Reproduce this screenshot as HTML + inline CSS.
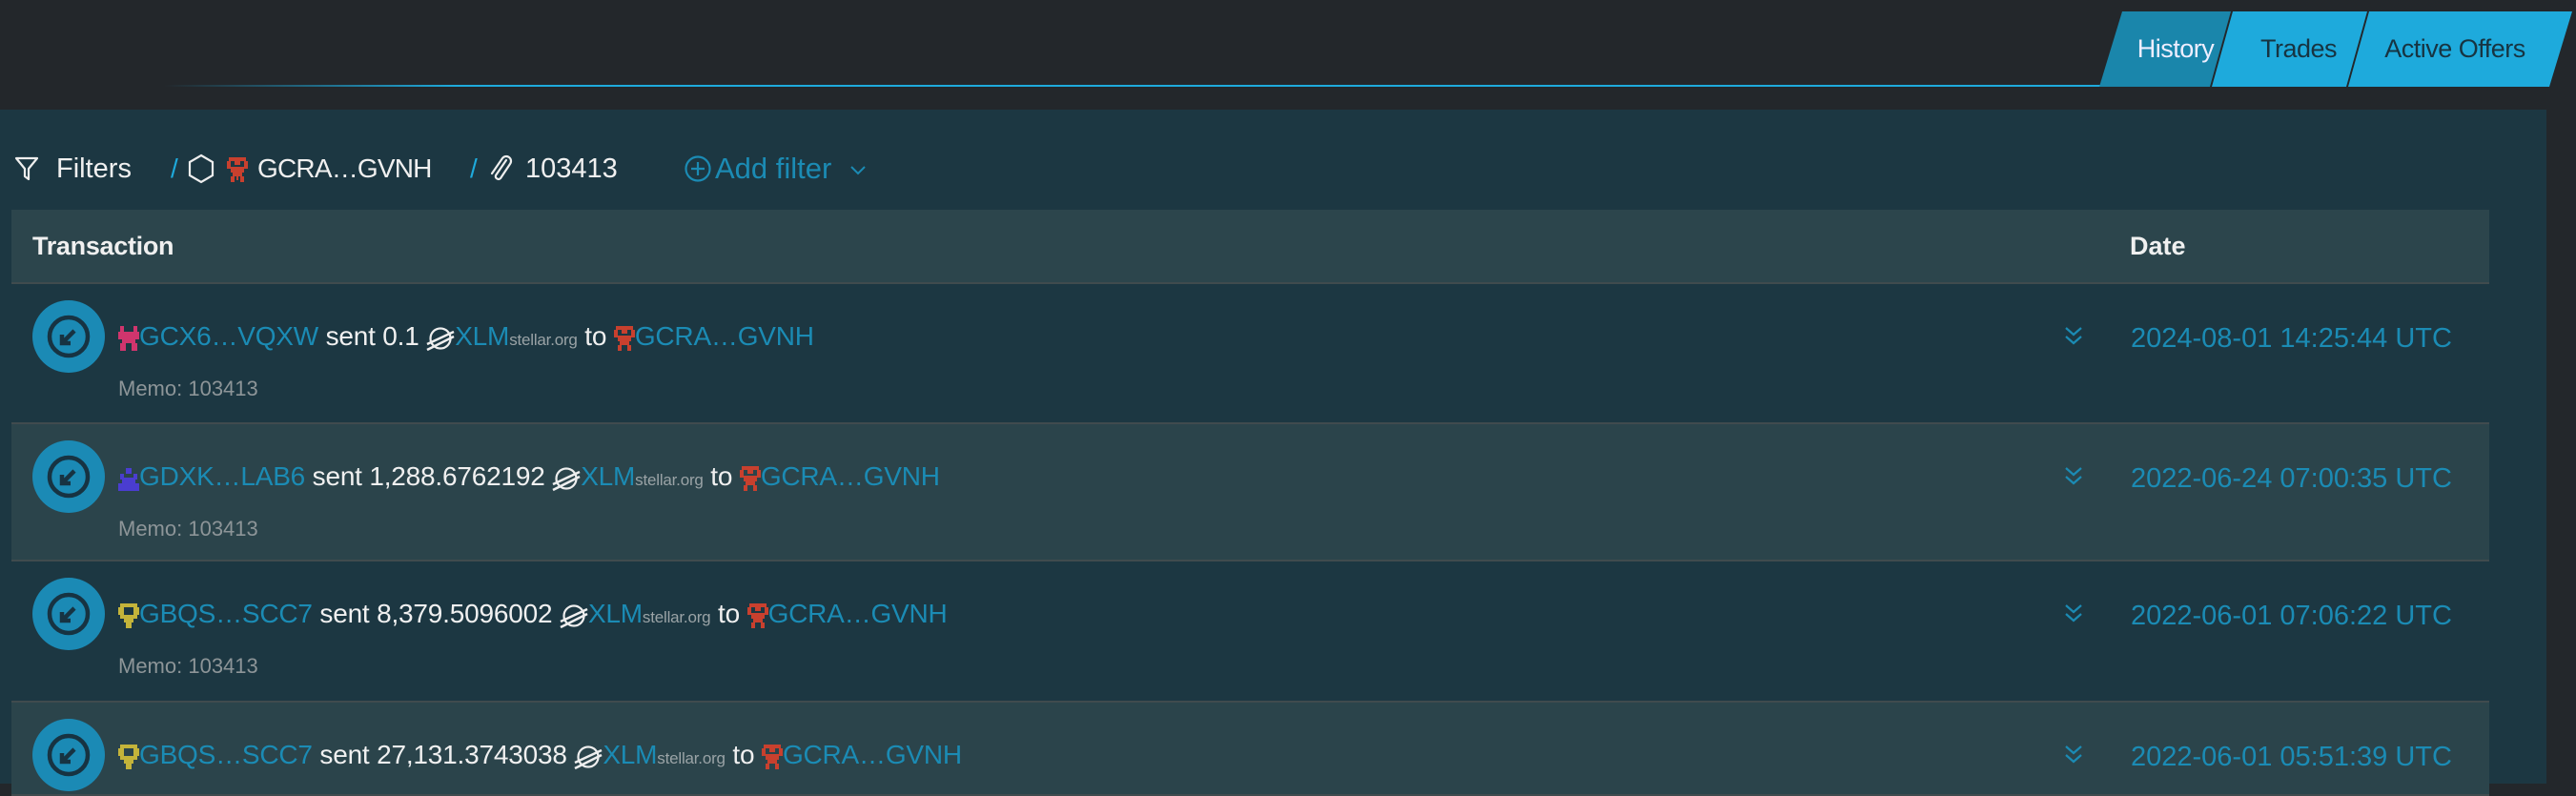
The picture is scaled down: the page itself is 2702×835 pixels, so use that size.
<!DOCTYPE html>
<html><head><meta charset="utf-8"><style>
*{margin:0;padding:0;box-sizing:border-box}
body{width:2702px;height:822px;background:#23272b;position:relative;overflow:hidden;font-family:"Liberation Sans",sans-serif;color:#f0f0f0}
.abs{position:absolute;white-space:nowrap}
.panel{position:absolute;left:0;top:115px;width:2671px;height:707px;background:#1c3742}
.tab{position:absolute;top:12px;height:79px;line-height:79px;font-size:27px;text-align:center;white-space:nowrap;letter-spacing:-0.5px}
.row{position:absolute;left:12px;width:2599px;height:146px}
.row.alt{background:#2b444b;border-top:2px solid #404b4e;border-bottom:2px solid #404b4e}
.circ{position:absolute;left:22px;top:17px;width:76px;height:76px;border-radius:50%;background:#1b8ab5}
.line{position:absolute;left:112px;top:35px;font-size:28px;white-space:nowrap;line-height:40px;letter-spacing:-0.2px}
.b{color:#1b8bb4}
.small{font-size:17px;color:#9aa3a6}
.memo{position:absolute;left:112px;top:97px;color:#8d9598;font-size:22px}
.chev{position:absolute;left:2152px;top:43px}
.date{position:absolute;left:2223px;top:37px;font-size:29px;color:#1b8bb4;line-height:40px}
svg{vertical-align:middle}
</style></head><body>

<div class="abs" style="left:172px;top:89px;width:2040px;height:2px;background:linear-gradient(90deg,rgba(30,170,220,0),#1eaadc 15%)"></div>
<svg class="abs" style="left:2195px;top:12px" width="507" height="80">
<polygon points="31,0 145,0 123,79 7,79" fill="#1a86ab"/>
<polygon points="147,0 288,0 266,79 125,79" fill="#1eaadc"/>
<polygon points="290,0 503,0 479,79 268,79" fill="#1eaadc"/>
</svg>
<div class="tab" style="left:2232px;width:100px;color:#eef">History</div>
<div class="tab" style="left:2365px;width:92px;color:#173442">Trades</div>
<div class="tab" style="left:2495px;width:160px;color:#173442">Active Offers</div>

<div class="panel"></div>

<div class="abs" style="left:15px;top:160px;font-size:28px;line-height:34px">
<svg width="26" height="28" viewBox="0 0 26 28" style="position:absolute;left:0;top:3px"><path d="M2 3 H24 L15 14 V25 L11 22 V14 Z" fill="none" stroke="#eee" stroke-width="2.2" stroke-linejoin="round"/></svg>
<span style="position:absolute;left:44px;font-size:29px">Filters</span>
<span style="position:absolute;left:164px;color:#1eaadc">/</span>
<svg width="28" height="32" viewBox="0 0 28 32" style="position:absolute;left:182px;top:1px"><polygon points="14,2 26,9 26,23 14,30 2,23 2,9" fill="none" stroke="#eee" stroke-width="2.2"/></svg>
<svg width="22" height="26" viewBox="0 0 11 13" style="position:absolute;left:223px;top:5px" shape-rendering="crispEdges" fill="#c8402e"><rect x="1" y="0" width="9" height="2"/><rect x="0" y="2" width="2" height="4"/><rect x="9" y="2" width="2" height="4"/><rect x="2" y="5" width="7" height="3"/><rect x="4" y="2" width="3" height="2"/><rect x="3" y="8" width="5" height="2"/><rect x="2" y="10" width="2" height="3"/><rect x="7" y="10" width="2" height="3"/><rect x="5" y="10" width="1" height="2"/></svg>
<span style="position:absolute;left:255px;letter-spacing:-0.8px">GCRA…GVNH</span>
<span style="position:absolute;left:478px;color:#1eaadc">/</span>
<svg width="26" height="30" viewBox="0 0 26 30" style="position:absolute;left:497px;top:2px"><path d="M19 6 L8 22 a3 3 0 0 0 5 3 L23 10 a5 5 0 0 0 -8 -6 L4 20" fill="none" stroke="#eee" stroke-width="2.2" stroke-linecap="round"/></svg>
<span style="position:absolute;left:536px;font-size:29px">103413</span>
<svg width="30" height="30" viewBox="0 0 30 30" style="position:absolute;left:702px;top:2px"><circle cx="15" cy="15" r="12.5" fill="none" stroke="#1b8bb4" stroke-width="2.2"/><path d="M15 8 V22 M8 15 H22" stroke="#1b8bb4" stroke-width="2.2"/></svg>
<span style="position:absolute;left:735px;color:#1b8bb4;font-size:31px">Add filter</span>
<svg width="18" height="12" viewBox="0 0 18 12" style="position:absolute;left:876px;top:13px"><path d="M2 2 L9 9 L16 2" fill="none" stroke="#1b8bb4" stroke-width="2"/></svg>
</div>

<div class="abs" style="left:12px;top:220px;width:2599px;height:78px;background:#2c454c;border-bottom:2px solid #404b4e"></div>
<div class="abs" style="left:34px;top:240px;font-weight:bold;font-size:27px;line-height:36px;letter-spacing:-0.3px">Transaction</div>
<div class="abs" style="left:2234px;top:240px;font-weight:bold;font-size:27px;line-height:36px">Date</div>

<svg width="0" height="0" style="position:absolute">
<defs>
<g id="arr"><circle cx="38" cy="38" r="20" fill="none" stroke="#173342" stroke-width="4.5"/><path d="M44 32 L31 45 M31 36 V45 H40" fill="none" stroke="#173342" stroke-width="4.5"/></g>
<g id="xlm"><circle cx="15" cy="15" r="10.5" fill="none" stroke="#eee" stroke-width="2.2"/><path d="M1 21 L29 8 M1 27 L29 13" stroke="#eee" stroke-width="2.6"/></g>
<g id="red" fill="#c8402e"><rect x="1" y="0" width="9" height="2"/><rect x="0" y="2" width="2" height="4"/><rect x="9" y="2" width="2" height="4"/><rect x="2" y="5" width="7" height="3"/><rect x="4" y="2" width="3" height="2"/><rect x="3" y="8" width="5" height="2"/><rect x="2" y="10" width="2" height="3"/><rect x="7" y="10" width="2" height="3"/></g>
<g id="chv"><path d="M3 3 L11 10 L19 3 M3 12 L11 19 L19 12" fill="none" stroke="#1b8bb4" stroke-width="2.2"/></g>
</defs></svg>

<div class="row" style="top:298px">
<div class="circ"><svg width="76" height="76"><use href="#arr"/></svg></div>
<div class="line"><svg width="22" height="26" viewBox="0 0 11 13" shape-rendering="crispEdges" fill="#d0356d"><rect x="1" y="0" width="2" height="3"/><rect x="8" y="0" width="2" height="3"/><rect x="0" y="3" width="11" height="4"/><rect x="2" y="7" width="7" height="2"/><rect x="1" y="9" width="3" height="4"/><rect x="7" y="9" width="3" height="4"/></svg><span class="b">GCX6…VQXW</span> sent 0.1 <svg width="30" height="30"><use href="#xlm"/></svg><span class="b">XLM</span><span class="small">stellar.org</span> to <svg width="22" height="26" viewBox="0 0 11 13" shape-rendering="crispEdges"><use href="#red"/></svg><span class="b">GCRA…GVNH</span></div>
<div class="memo">Memo: 103413</div>
<svg class="chev" width="22" height="22"><use href="#chv"/></svg>
<div class="date">2024-08-01 14:25:44 UTC</div>
</div>

<div class="row alt" style="top:443px">
<div class="circ"><svg width="76" height="76"><use href="#arr"/></svg></div>
<div class="line"><svg width="22" height="26" viewBox="0 0 11 13" shape-rendering="crispEdges" fill="#4a3dd0"><rect x="4" y="1" width="3" height="3"/><rect x="1" y="4" width="2" height="3"/><rect x="8" y="4" width="2" height="3"/><rect x="2" y="6" width="7" height="3"/><rect x="0" y="9" width="11" height="4"/></svg><span class="b">GDXK…LAB6</span> sent 1,288.6762192 <svg width="30" height="30"><use href="#xlm"/></svg><span class="b">XLM</span><span class="small">stellar.org</span> to <svg width="22" height="26" viewBox="0 0 11 13" shape-rendering="crispEdges"><use href="#red"/></svg><span class="b">GCRA…GVNH</span></div>
<div class="memo">Memo: 103413</div>
<svg class="chev" width="22" height="22"><use href="#chv"/></svg>
<div class="date">2022-06-24 07:00:35 UTC</div>
</div>

<div class="row" style="top:589px">
<div class="circ"><svg width="76" height="76"><use href="#arr"/></svg></div>
<div class="line"><svg width="22" height="26" viewBox="0 0 11 13" shape-rendering="crispEdges" fill="#c4b43a"><rect x="1" y="0" width="9" height="2"/><rect x="0" y="2" width="3" height="4"/><rect x="8" y="2" width="3" height="4"/><rect x="1" y="6" width="9" height="2"/><rect x="3" y="8" width="5" height="2"/><rect x="4" y="10" width="3" height="3"/></svg><span class="b">GBQS…SCC7</span> sent 8,379.5096002 <svg width="30" height="30"><use href="#xlm"/></svg><span class="b">XLM</span><span class="small">stellar.org</span> to <svg width="22" height="26" viewBox="0 0 11 13" shape-rendering="crispEdges"><use href="#red"/></svg><span class="b">GCRA…GVNH</span></div>
<div class="memo">Memo: 103413</div>
<svg class="chev" width="22" height="22"><use href="#chv"/></svg>
<div class="date">2022-06-01 07:06:22 UTC</div>
</div>

<div class="row alt" style="top:735px;height:100px">
<div class="circ"><svg width="76" height="76"><use href="#arr"/></svg></div>
<div class="line"><svg width="22" height="26" viewBox="0 0 11 13" shape-rendering="crispEdges" fill="#c4b43a"><rect x="1" y="0" width="9" height="2"/><rect x="0" y="2" width="3" height="4"/><rect x="8" y="2" width="3" height="4"/><rect x="1" y="6" width="9" height="2"/><rect x="3" y="8" width="5" height="2"/><rect x="4" y="10" width="3" height="3"/></svg><span class="b">GBQS…SCC7</span> sent 27,131.3743038 <svg width="30" height="30"><use href="#xlm"/></svg><span class="b">XLM</span><span class="small">stellar.org</span> to <svg width="22" height="26" viewBox="0 0 11 13" shape-rendering="crispEdges"><use href="#red"/></svg><span class="b">GCRA…GVNH</span></div>
<svg class="chev" width="22" height="22"><use href="#chv"/></svg>
<div class="date">2022-06-01 05:51:39 UTC</div>
</div>

</body></html>
